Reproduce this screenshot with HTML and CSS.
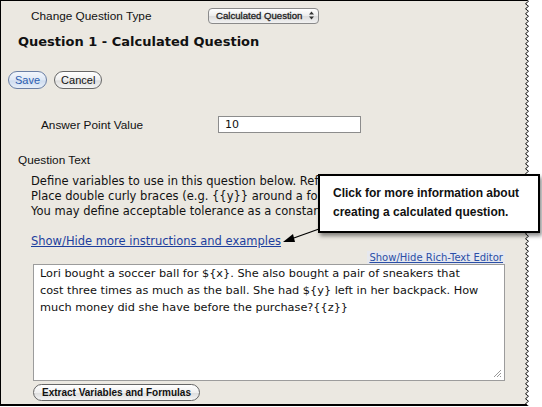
FILE: index.html
```html
<!DOCTYPE html>
<html>
<head>
<meta charset="utf-8">
<link rel="stylesheet" href="styles.css">
</head>
<body>
<div class="page">
  <div class="panel">
    <div class="row-type">
      <span class="label type-label">Change Question Type</span>
      <span class="select"><span class="select-text">Calculated Question</span><span class="arrows"><svg width="7" height="9" viewBox="0 0 7 9"><path d="M3.5 0.5 L6 3.5 L1 3.5 Z M3.5 8.5 L6 5.5 L1 5.5 Z" fill="#333"/></svg></span></span>
    </div>
    <h1 class="title">Question 1 - Calculated Question</h1>
    <div class="buttons">
      <span class="btn btn-save">Save</span>
      <span class="btn">Cancel</span>
    </div>
    <div class="row-points">
      <span class="label points-label">Answer Point Value</span>
      <span class="input">10</span>
    </div>
    <div class="label qt-label">Question Text</div>
    <div class="instructions">
      <div>Define variables to use in this question below. Ref</div>
      <div>Place double curly braces (e.g. {{y}} around a fo</div>
      <div>You may define acceptable tolerance as a constan</div>
    </div>
    <a class="link more-link">Show/Hide more instructions and examples</a>
    <div class="rte-row"><a class="rte-link">Show/Hide Rich-Text Editor</a></div>
    <div class="textarea">Lori bought a soccer ball for ${x}. She also bought a pair of sneakers that cost three times as much as the ball. She had ${y} left in her backpack. How much money did she have before the purchase?{{z}}<svg class="grip" width="9" height="9" viewBox="0 0 9 9"><path d="M8 1 L1 8 M8 4 L4 8 M8 7 L7 8" stroke="#999" stroke-width="1"/></svg></div>
    <div class="extract-row"><span class="btn btn-extract">Extract Variables and Formulas</span></div>
  </div>
  <svg class="edge" width="6" height="406" viewBox="0 0 6 406" preserveAspectRatio="none">
    <path id="wave" d="" fill="none" stroke="#111" stroke-width="1"/>
  </svg>
  <div class="outside"></div>
  <div class="callout">
    <div>Click for more information about</div>
    <div>creating a calculated question.</div>
  </div>
  <svg class="arrow" width="50" height="30" viewBox="0 0 50 30">
    <path d="M38 4 L10 14" stroke="#000" stroke-width="1.3"/>
    <path d="M2 17 L12 9 L14 17 Z" fill="#000"/>
  </svg>
</div>
<script src="wave.js"></script>
</body>
</html>
```

FILE: wave.js
```js
(function(){
  var d = "M3 0";
  for (var y = 0; y < 406; y += 5) {
    d += " Q6 " + (y + 1.25) + " 3 " + (y + 2.5) + " Q0 " + (y + 3.75) + " 3 " + (y + 5);
  }
  document.getElementById('wave').setAttribute('d', d);
})();
```

FILE: styles.css
```css
html, body {
  margin: 0;
  padding: 0;
  background: #fff;
}
.page {
  position: relative;
  display: flex;
  width: 542px;
  height: 407px;
  overflow: hidden;
}
.panel {
  width: 527px;
  height: 406px;
  box-sizing: border-box;
  background: #ebe8e1;
  border-top: 1px solid #000;
  border-left: 1px solid #000;
  border-bottom: 2px solid #000;
  font-family: "DejaVu Sans", Verdana, sans-serif;
  color: #111;
  display: flex;
  flex-direction: column;
}
.edge {
  flex: none;
  width: 6px;
  height: 406px;
  margin-left: -3px;
}
.outside {
  flex: 1;
  background: #fff;
}
.label {
  font-family: "Liberation Sans", Arial, sans-serif;
  font-size: 11.8px;
  color: #111;
}
.row-type {
  display: flex;
  align-items: center;
  padding: 6px 0 0 30px;
  height: 17px;
}
.type-label {
  width: 177px;
}
.select {
  box-sizing: border-box;
  width: 111px;
  height: 16px;
  border: 1px solid #8a8a8a;
  border-radius: 4px;
  background: linear-gradient(#ffffff, #ececec 50%, #dcdcdc 51%, #f2f2f2);
  font-size: 9.6px;
  font-family: "Liberation Sans", Arial, sans-serif;
  -webkit-text-stroke: 0.3px #222;
  line-height: 14px;
  padding-left: 7px;
  display: flex;
  justify-content: space-between;
  white-space: nowrap;
}
.select-text {
  color: #222;
}
.arrows {
  width: 13px;
  display: flex;
  align-items: center;
  justify-content: center;
}
.title {
  margin: 10px 0 0 17px;
  font-size: 13px;
  font-weight: bold;
  line-height: 16px;
  font-family: "DejaVu Sans", Verdana, sans-serif;
}
.buttons {
  display: flex;
  gap: 7px;
  margin: 21px 0 0 7px;
}
.btn {
  box-sizing: border-box;
  height: 18px;
  border: 1px solid #666;
  border-radius: 9px;
  background: linear-gradient(#ffffff, #efefef 50%, #dedede 55%, #f4f4f4);
  font-family: "Liberation Sans", Arial, sans-serif;
  font-size: 11px;
  line-height: 16px;
  padding: 0 6px;
  color: #111;
}
.btn-save {
  color: #2a5db0;
  background: linear-gradient(#f2f6fc, #dfe8f5 50%, #cfdcef 55%, #e6eef9);
  border-color: #6a7fa5;
}
.row-points {
  display: flex;
  align-items: center;
  margin: 27px 0 0 40px;
  height: 17px;
}
.points-label {
  width: 177px;
}
.input {
  box-sizing: border-box;
  width: 143px;
  height: 17px;
  border: 1px solid #8c8c8c;
  background: #fff;
  font-size: 11px;
  line-height: 15px;
  padding-left: 6px;
}
.qt-label {
  margin: 19px 0 0 17px;
  line-height: 16px;
}
.instructions {
  margin: 6px 0 0 30px;
  font-size: 11.5px;
  line-height: 15px;
  white-space: nowrap;
}
.link {
  margin: 15px 0 0 30px;
  font-size: 11.5px;
  line-height: 15px;
  color: #1d3f9e;
  text-decoration: underline;
  align-self: flex-start;
}
.rte-row {
  display: flex;
  justify-content: flex-end;
  margin: 2px 22px 0 0;
}
.rte-link {
  font-size: 10px;
  line-height: 13px;
  color: #2a4ea6;
  text-decoration: underline;
  background: #e6e8ee;
  padding: 0 2px;
}
.textarea {
  position: relative;
  box-sizing: border-box;
  margin: 0 0 0 32px;
  width: 472px;
  height: 117px;
  border: 1px solid #9c9c9c;
  background: #fff;
  font-size: 11.3px;
  line-height: 17px;
  padding: 0 20px 0 6px;
}
.grip {
  position: absolute;
  right: 2px;
  bottom: 2px;
}
.extract-row {
  margin: 3px 0 0 32px;
  display: flex;
}
.btn-extract {
  font-size: 10px;
  height: 17px;
  line-height: 15px;
  padding: 0 8px;
  font-weight: bold;
}
.callout {
  position: absolute;
  left: 318px;
  top: 174px;
  width: 222px;
  height: 59px;
  box-sizing: border-box;
  border: 2px solid #000;
  background: #fff;
  box-shadow: 2px 3px 4px rgba(0,0,0,0.45);
  font-family: "Liberation Sans", Arial, sans-serif;
  font-weight: bold;
  font-size: 12px;
  line-height: 19px;
  padding: 8px 0 0 13px;
  color: #111;
}
.arrow {
  position: absolute;
  left: 281px;
  top: 225px;
}
```
